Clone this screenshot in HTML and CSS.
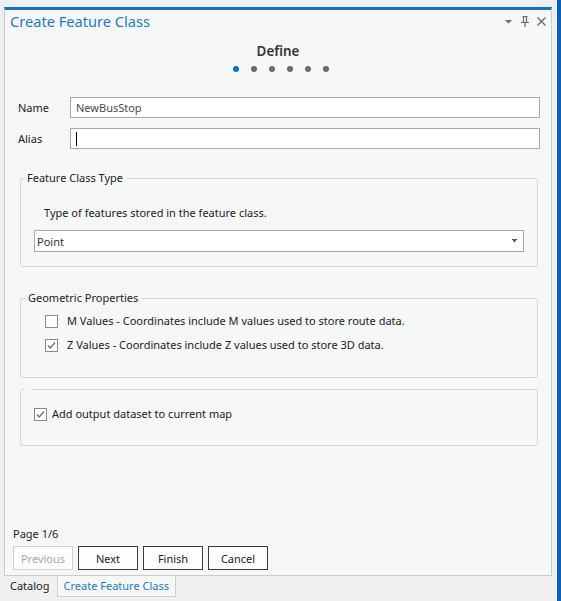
FILE: index.html
```html
<!DOCTYPE html>
<html>
<head>
<meta charset="utf-8">
<link rel="stylesheet" href="styles.css">
</head>
<body>
<div class="screen">
  <div class="main">
    <div class="panel">
      <div class="header">
        <span class="title">Create Feature Class</span>
        <div class="tools">
          <svg class="tool" width="8" height="4" viewBox="0 0 8 4"><path d="M0 0H7L3.5 3.5Z" fill="#6b6b6b"/></svg>
          <svg class="tool" width="8" height="11" viewBox="0 0 8 11"><path d="M1.5 0.5H6.5M2.5 0.5V6.5M5.5 0.5V6.5M0 6.5H8M4 6.5V11" stroke="#6b6b6b" stroke-width="1.2" fill="none"/></svg>
          <svg class="tool" width="9" height="9" viewBox="0 0 9 9"><path d="M0.5 0.5L8.5 8.5M8.5 0.5L0.5 8.5" stroke="#6b6b6b" stroke-width="1.3"/></svg>
        </div>
      </div>
      <div class="stepper">
        <div class="step-name">Define</div>
        <div class="dots">
          <span class="dot active"></span><span class="dot"></span><span class="dot"></span><span class="dot"></span><span class="dot"></span><span class="dot"></span>
        </div>
      </div>
      <div class="form">
        <div class="row">
          <label class="lbl">Name</label>
          <div class="input">NewBusStop</div>
        </div>
        <div class="row row2">
          <label class="lbl">Alias</label>
          <div class="input"><span class="caret"></span></div>
        </div>
        <fieldset class="group g1">
          <legend>Feature Class Type</legend>
          <div class="desc">Type of features stored in the feature class.</div>
          <div class="select"><span>Point</span><svg width="5" height="4" viewBox="0 0 5 4"><path d="M0 0H5V1H0ZM0.5 1H4.5L2.5 3.5Z" fill="#555"/></svg></div>
        </fieldset>
        <fieldset class="group g2">
          <legend>Geometric Properties</legend>
          <div class="check">
            <span class="box"></span>
            <span>M Values - Coordinates include M values used to store route data.</span>
          </div>
          <div class="check">
            <span class="box"><svg width="11" height="11" viewBox="0 0 11 11"><path d="M2 5.5L4.3 8L9 2.5" stroke="#6e6e6e" stroke-width="1.2" fill="none"/></svg></span>
            <span>Z Values - Coordinates include Z values used to store 3D data.</span>
          </div>
        </fieldset>
        <fieldset class="group g3">
          <legend></legend>
          <div class="check">
            <span class="box"><svg width="11" height="11" viewBox="0 0 11 11"><path d="M2 5.5L4.3 8L9 2.5" stroke="#6e6e6e" stroke-width="1.2" fill="none"/></svg></span>
            <span>Add output dataset to current map</span>
          </div>
        </fieldset>
      </div>
      <div class="footer">
        <div class="page">Page 1/6</div>
        <div class="buttons">
          <button class="btn" disabled>Previous</button>
          <button class="btn">Next</button>
          <button class="btn">Finish</button>
          <button class="btn">Cancel</button>
        </div>
      </div>
    </div>
    <div class="tabs">
      <span class="tab">Catalog</span>
      <span class="tab selected">Create Feature Class</span>
    </div>
  </div>
  <div class="edge"></div>
</div>
</body>
</html>
```

FILE: styles.css
```css
* { box-sizing: border-box; }
body {
  margin: 0;
  background: #f0f0f0;
  font-family: "Noto Sans", sans-serif;
  font-size: 11px;
  color: #222;
}
.screen {
  display: flex;
  width: 561px;
  height: 601px;
}
.main {
  width: 552px;
  padding: 7px 0 0 4px;
  display: flex;
  flex-direction: column;
}
.edge {
  width: 4px;
  margin-left: 5px;
  background: #0b5fb5;
}
.panel {
  height: 569px;
  background: #f6f7f7;
  border: 1px solid #cbcbcb;
  border-top: 3px solid #0b74c8;
  display: flex;
  flex-direction: column;
}
.header {
  height: 22px;
  display: flex;
  align-items: center;
  justify-content: space-between;
  padding: 0 5px 0 5px;
}
.title {
  color: #1e7acb;
  font-size: 14.6px;
  line-height: 20px;
}
.tools {
  display: flex;
  align-items: center;
  gap: 8px;
  padding-top: 1px;
}
.stepper {
  margin-top: 10px;
  display: flex;
  flex-direction: column;
  align-items: center;
}
.step-name {
  font-size: 13.4px;
  line-height: 18px;
  font-weight: 600;
  color: #333;
}
.dots {
  display: flex;
  gap: 12px;
  margin-top: 6px;
  padding-left: 6px;
}
.dot {
  width: 6px;
  height: 6px;
  border-radius: 50%;
  background: #6b6b6b;
}
.dot.active { background: #0a74c8; }
.form {
  margin-top: 25px;
  padding: 0 11px 0 13px;
}
.row {
  display: flex;
  align-items: center;
}
.row2 { margin-top: 10px; }
.lbl {
  width: 52px;
  line-height: 16px;
}
.input {
  flex: 1;
  height: 21px;
  background: #fff;
  border: 1px solid #a9a9a9;
  padding: 0 5px;
  line-height: 19px;
  color: #4a4a4a;
  display: flex;
  align-items: center;
}
.caret {
  width: 1px;
  height: 14px;
  background: #000;
}
.group {
  margin: 0 2px;
  border: 1px solid #d6d6d6;
  border-radius: 3px;
  padding: 0;
  min-width: 0;
}
.group legend {
  padding: 0 4px 0 2px;
  line-height: 16px;
}
.g1 { margin-top: 21px; padding: 19px 13px 14px; }
.g1 legend { margin-left: -9px; }
.desc { padding-left: 10px; line-height: 16px; }
.select {
  margin-top: 9px;
  height: 22px;
  background: #fff;
  border: 1px solid #a9a9a9;
  display: flex;
  align-items: center;
  justify-content: space-between;
  padding: 0 6px 0 2px;
  color: #333;
}
.g2 { margin-top: 23px; padding: 7px 20px 24px 24px; }
.g2 legend { margin-left: -19px; }
.check {
  display: flex;
  align-items: center;
  line-height: 16px;
  height: 16px;
}
.check + .check { margin-top: 8px; }
.box {
  width: 13px;
  height: 13px;
  border: 1px solid #8a8a8a;
  background: #fff;
  display: flex;
  align-items: center;
  justify-content: center;
  margin-right: 9px;
  flex: none;
}
.g3 { margin-top: 11px; padding: 16px 13px 23px; }
.g3 legend { width: 7px; padding: 0; margin-left: -10px; }
.g3 .box { margin-right: 5px; }
.footer {
  margin-top: auto;
  padding: 0 0 5px 8px;
}
.page { line-height: 16px; }
.buttons {
  margin-top: 4px;
  display: flex;
  gap: 5px;
}
.btn {
  width: 60px;
  height: 24px;
  background: #fdfdfd;
  border: 1px solid #3c3c3c;
  font: inherit;
  color: #222;
  padding: 0;
}
.btn:disabled {
  border-color: #cfcfcf;
  color: #a8a8a8;
}
.tabs {
  display: flex;
  height: 22px;
}
.tab {
  padding: 0 6px;
  line-height: 20px;
  color: #222;
}
.tab.selected {
  margin-left: 1px;
  color: #1e7acb;
  background: #f6f7f7;
  border: 1px solid #cfcfcf;
  border-top: none;
  height: 21px;
}
```
